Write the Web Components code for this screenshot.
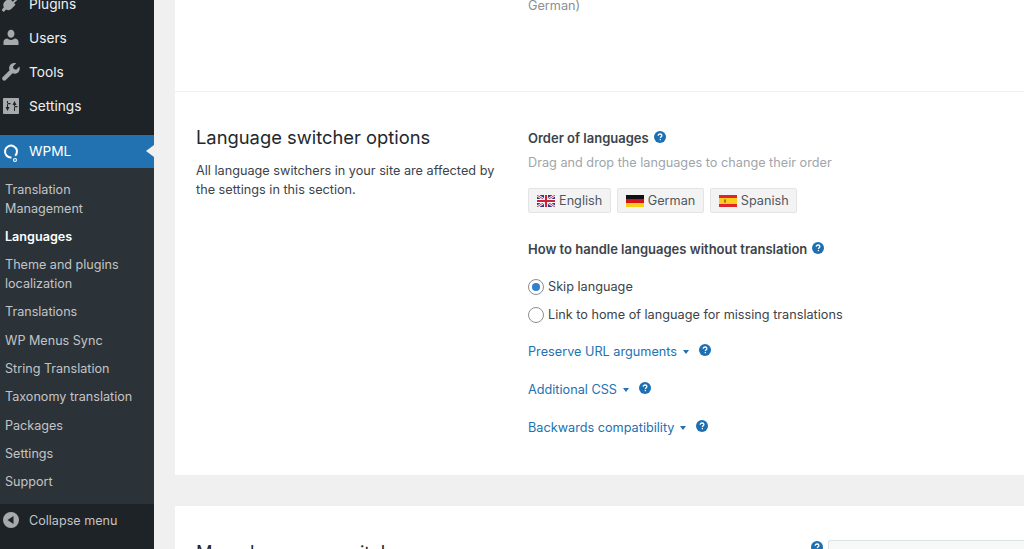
<!DOCTYPE html>
<html lang="en">
<head>
<meta charset="utf-8">
<title>Languages</title>
<style>
  html, body { margin: 0; height: 100%; overflow: hidden; background: #f0f0f1; }
  body { font: 12.7px/19px Inter, "Liberation Sans", sans-serif; color: #3c434a; }
</style>
</head>
<body>
<wp-shell>
  <wp-sidebar slot="side">
    <menu-item icon="plugins">Plugins</menu-item>
    <menu-item icon="users">Users</menu-item>
    <menu-item icon="tools">Tools</menu-item>
    <menu-item icon="settings">Settings</menu-item>
    <menu-item icon="wpml" active>WPML</menu-item>
    <sub-menu>
      <sub-item>Translation Management</sub-item>
      <sub-item current>Languages</sub-item>
      <sub-item>Theme and plugins localization</sub-item>
      <sub-item>Translations</sub-item>
      <sub-item>WP Menus Sync</sub-item>
      <sub-item>String Translation</sub-item>
      <sub-item>Taxonomy translation</sub-item>
      <sub-item>Packages</sub-item>
      <sub-item>Settings</sub-item>
      <sub-item>Support</sub-item>
    </sub-menu>
    <menu-item icon="collapse" small>Collapse menu</menu-item>
  </wp-sidebar>

  <settings-card>
    <settings-section plain>
      <p slot="body" style="margin:0;color:#8c8f94">German)</p>
    </settings-section>
    <settings-section>
      <span slot="title">Language switcher options</span>
      <span slot="desc">All language switchers in your site are affected by the settings in this section.</span>
      <div slot="body">
        <field-label>Order of languages</field-label>
        <hint-text>Drag and drop the languages to change their order</hint-text>
        <lang-list>
          <lang-chip flag="gb">English</lang-chip>
          <lang-chip flag="de">German</lang-chip>
          <lang-chip flag="es">Spanish</lang-chip>
        </lang-list>
        <field-label>How to handle languages without translation</field-label>
        <radio-option checked>Skip language</radio-option>
        <radio-option>Link to home of language for missing translations</radio-option>
        <expand-link first>Preserve URL arguments</expand-link>
        <expand-link>Additional CSS</expand-link>
        <expand-link>Backwards compatibility</expand-link>
      </div>
    </settings-section>
  </settings-card>

  <settings-card>
    <settings-section last>
      <span slot="title">Menu language switcher</span>
      <menu-select slot="body"></menu-select>
    </settings-section>
  </settings-card>
</wp-shell>

<script>
const ICONS = {
  plugins: '<path d="M13.100 1.500 9.400 5.200 7.600 3.900 3.400 8.100c-1.300 1.300-1.500 3.600-.5 5.200L.6 15.900l2.100 2 2.500-2.400c1.600 1 3.800.8 5.100-.5l4.200-4.200-1.400-1.700 3.800-3.700-1.400-1.400-3.700 3.700-1.800-1.800 3.700-3.700z"/>',
  users: '<path d="M10 1.800c2.100 0 3.500 1.800 3.500 3.900S12.100 9.800 10 9.800 6.500 7.800 6.500 5.700s1.400-3.900 3.500-3.900zM2.500 17v-3.200c0-1.900 1.800-3 3.700-3.200 1 .9 2.400 1.400 3.800 1.400s2.800-.5 3.800-1.400c1.900.2 3.700 1.300 3.700 3.200V17z"/>',
  tools: '<path d="M18.400 4.500 15.200 7.700 12.700 7 12 4.500 15.200 1.300C13.300.6 11.100 1 9.600 2.500 8.100 4 7.700 6.300 8.600 8.200L1.800 15c-.9.900-.9 2.200 0 3 .9.900 2.200.9 3 0l6.800-6.800c1.900.9 4.200.5 5.700-1 1.500-1.500 1.800-3.700 1.100-5.700z"/>',
  settings: '<path fill-rule="evenodd" d="M3 2h14c.6 0 1 .4 1 1v14c0 .6-.4 1-1 1H3c-.6 0-1-.4-1-1V3c0-.6.4-1 1-1zM7 5H6v6H4.500L6.500 15l2-4H7zm6.500 0-2 4H13v6h1V9h1.500zM9.500 7v1.200h-3V7zm7 3v1.200h-3V10z"/>',
  collapse: '<path fill-rule="evenodd" d="M10 2a8 8 0 1 1 0 16 8 8 0 0 1 0-16zm2.500 4L6.500 10l6 4z"/>'
};
const WPML_ICON = '<path d="M14.200 13.800A6 6 0 1 0 10.500 15.500" fill="none" stroke="#fff" stroke-width="2"/><circle cx="14" cy="18" r="1.500" fill="none" stroke="#fff" stroke-width="1.100"/>';

const HELP = `<svg width="12" height="12" viewBox="0 0 12 12" aria-hidden="true"><circle cx="6" cy="6" r="6" fill="#1d6fb3"/><path d="M4.200 4.700c0-1.100.8-1.700 1.900-1.700s1.800.6 1.800 1.500c0 1.300-1.500 1.300-1.500 2.500" fill="none" stroke="#fff" stroke-width="1.300"/><rect x="5.700" y="7.900" width="1.300" height="1.300" fill="#fff"/></svg>`;

const FLAGS = {
  gb: `<svg width="18" height="12" viewBox="0 0 18 12"><rect width="18" height="12" fill="#2b3f86"/><path d="M0 0 18 12M18 0 0 12" stroke="#fff" stroke-width="2.600"/><path d="M0 0 18 12M18 0 0 12" stroke="#d0354a" stroke-width="1"/><path d="M9 0v12M0 6h18" stroke="#fff" stroke-width="4"/><path d="M9 0v12M0 6h18" stroke="#d0203a" stroke-width="2.200"/></svg>`,
  de: `<svg width="18" height="12" viewBox="0 0 18 12"><rect width="18" height="4" fill="#111"/><rect y="4" width="18" height="4" fill="#d8121c"/><rect y="8" width="18" height="4" fill="#fbcf18"/></svg>`,
  es: `<svg width="18" height="12" viewBox="0 0 18 12"><rect width="18" height="12" fill="#e0262a"/><rect y="3" width="18" height="6" fill="#fbce1a"/><rect x="5" y="4.500" width="2" height="3" fill="#c9563a"/></svg>`
};

// small helper, all elements here only need a static shadow root
class BaseEl extends HTMLElement {
  constructor() {
    super();
    this.attachShadow({ mode: "open" });
  }
  connectedCallback() {
    this.shadowRoot.innerHTML = this.markup();
  }
}

class WpShell extends BaseEl {
  markup() {
    return `<style>
      :host { display: grid; grid-template-columns: 154px 1fr; height: 562px; margin-top: -13px; overflow: hidden; }
      main { padding-left: 21px; display: flex; flex-direction: column; gap: 31px; }
    </style>
    <slot name="side"></slot>
    <main><slot></slot></main>`;
  }
}

class WpSidebar extends BaseEl {
  markup() {
    return `<style>
      :host { display: flex; flex-direction: column; background: #1d2327; height: 562px; }
    </style><slot></slot>`;
  }
}

class MenuItem extends BaseEl {
  markup() {
    const name = this.getAttribute("icon");
    const active = this.hasAttribute("active");
    const glyph = name === "wpml" ? WPML_ICON : ICONS[name];
    return `<style>
      :host { display: flex; align-items: center; gap: 8px; height: 34px; padding-left: 1px; box-sizing: border-box;
        color: #f0f0f1; font-size: 13.700px; position: relative; }
      :host([active]) { background: #2271b1; color: #fff; height: 33px; margin-top: 12px; }
      :host([small]) { height: 35px; padding-bottom: 2px; color: #c3c4c7; font-size: 12.600px; }
      svg { width: 20px; height: 20px; fill: #a7aaad; flex: none; overflow: visible; }
      .arrow { position: absolute; right: 0; top: 10px; border: 6.500px solid transparent; border-right: 8px solid #f0f0f1; border-left: 0; }
    </style>
    <svg viewBox="0 0 20 20" aria-hidden="true">${glyph}</svg><slot></slot>
    ${active ? '<span class="arrow"></span>' : ""}`;
  }
}

class SubMenu extends BaseEl {
  markup() {
    return `<style>
      :host { display: flex; flex-direction: column; background: #2c3338; padding: 11.600px 0 12.400px; gap: 9.300px; }
    </style><slot></slot>`;
  }
}

class SubItem extends BaseEl {
  markup() {
    return `<style>
      :host { display: block; padding: 0 10px 0 5px; font-size: 12.600px; line-height: 19px; color: #c3c4c7; }
      :host([current]) { color: #fff; font-weight: 600; }
    </style><slot></slot>`;
  }
}

class SettingsCard extends BaseEl {
  markup() {
    return `<style>
      :host { display: block; background: #fff; }
    </style><slot></slot>`;
  }
}

class SettingsSection extends BaseEl {
  markup() {
    return `<style>
      :host { display: grid; grid-template-columns: 332px 1fr; padding: 34px 0 37.500px 21px; border-top: 1px solid #f0f0f1; }
      :host([plain]) { padding: 9px 0 76px 21px; border-top: 0; }
      :host([last]) { padding: 35px 0 0 21px; border-top: 0; }
      h2 { margin: -1px 0 12px; font-size: 18.350px; line-height: 24px; font-weight: 400; color: #23282d; }
      p { margin: 0; width: 306px; font-size: 12.700px; line-height: 19px; }
      .right { padding-top: 3px; }
      :host([plain]) .right, :host([last]) .right { padding-top: 0; }
    </style>
    <div><h2><slot name="title"></slot></h2><p><slot name="desc"></slot></p></div>
    <div class="right"><slot name="body"></slot></div>`;
  }
}

class FieldLabel extends BaseEl {
  markup() {
    return `<style>
      :host { display: flex; align-items: center; gap: 5px; font-weight: 600; font-size: 13px; line-height: 19px; color: #3c434a; }
      svg { margin-top: -3px; }
    </style><slot></slot>${HELP}`;
  }
}

class HintText extends BaseEl {
  markup() {
    return `<style>
      :host { display: block; margin-top: 5px; color: #a0a5aa; font-size: 12.700px; line-height: 19px; }
    </style><slot></slot>`;
  }
}

class LangList extends BaseEl {
  markup() {
    return `<style>
      :host { display: flex; gap: 6px; margin: 16px 0 27px; }
    </style><slot></slot>`;
  }
}

class LangChip extends BaseEl {
  markup() {
    return `<style>
      :host { display: flex; align-items: center; gap: 4px; height: 25px; padding: 0 7.500px 0 8px; box-sizing: border-box;
        background: #f3f3f4; border: 1px solid #e4e4e5; border-radius: 2px; font-size: 12.700px; color: #50575e; }
      svg { flex: none; }
    </style>${FLAGS[this.getAttribute("flag")]}<slot></slot>`;
  }
}

class RadioOption extends BaseEl {
  markup() {
    return `<style>
      :host { display: flex; align-items: center; gap: 4px; font-size: 12.700px; line-height: 19px; color: #3c434a; margin-top: 9px; }
      :host([checked]) { margin-top: 18px; }
      .dot { width: 16px; height: 16px; box-sizing: border-box; border: 1px solid #8c8f94; border-radius: 50%; display: grid; place-items: center; background: #fff; }
      :host([checked]) .dot::after { content: ""; width: 8px; height: 8px; border-radius: 50%; background: #2f80cf; }
    </style><span class="dot"></span><slot></slot>`;
  }
}

class ExpandLink extends BaseEl {
  markup() {
    return `<style>
      :host { display: flex; align-items: center; font-size: 12.700px; line-height: 19px; color: #2271b1; margin-top: 19px; }
      :host([first]) { margin-top: 18px; }
      i { width: 0; height: 0; margin: 0 9.500px 0 6px; border: 3.500px solid transparent; border-top: 4.500px solid #2271b1; border-bottom: 0; }
      svg { margin-top: -3px; }
    </style><slot></slot><i></i>${HELP}`;
  }
}

class MenuSelect extends BaseEl {
  markup() {
    return `<style>
      :host { display: flex; justify-content: flex-end; align-items: flex-start; gap: 5px; margin-top: -1px; }
      .box { width: 196px; height: 40px; box-sizing: border-box; background: #f7f8f8; border: 1px solid #dfe2e2; border-right: 0; border-radius: 3px 0 0 3px; }
      svg { margin-top: 1px; }
    </style>${HELP}<div class="box"></div>`;
  }
}

customElements.define("wp-shell", WpShell);
customElements.define("wp-sidebar", WpSidebar);
customElements.define("menu-item", MenuItem);
customElements.define("sub-menu", SubMenu);
customElements.define("sub-item", SubItem);
customElements.define("settings-card", SettingsCard);
customElements.define("settings-section", SettingsSection);
customElements.define("field-label", FieldLabel);
customElements.define("hint-text", HintText);
customElements.define("lang-list", LangList);
customElements.define("lang-chip", LangChip);
customElements.define("radio-option", RadioOption);
customElements.define("expand-link", ExpandLink);
customElements.define("menu-select", MenuSelect);
</script>
</body>
</html>
